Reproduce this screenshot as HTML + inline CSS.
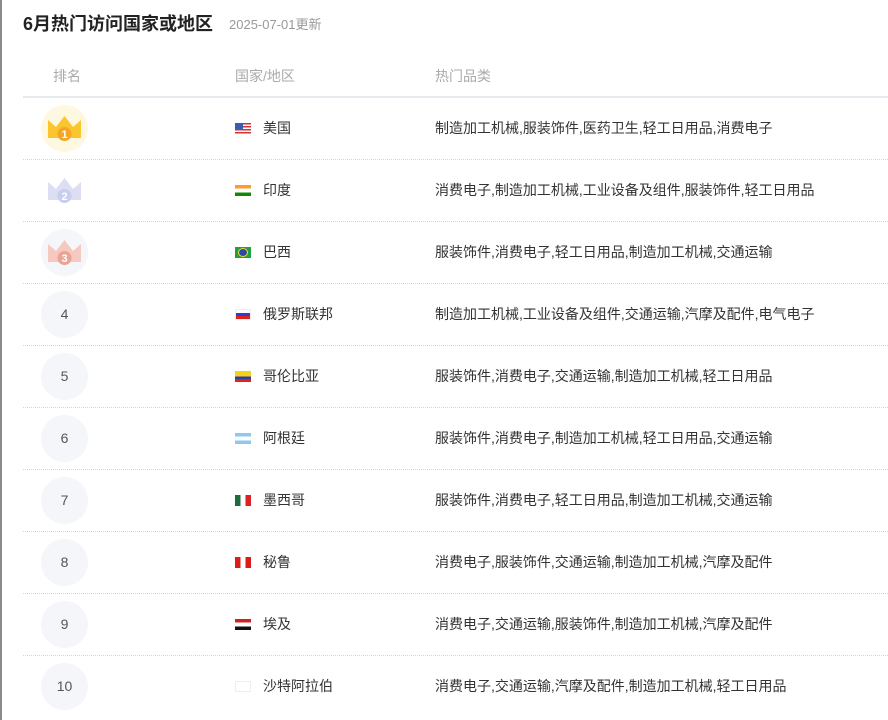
<!DOCTYPE html>
<html><head><meta charset="utf-8"><style>
*{margin:0;padding:0;box-sizing:border-box}
body{width:888px;height:720px;overflow:hidden;background:#fff;font-family:"Liberation Sans","Noto Sans CJK SC",sans-serif;position:relative;border-left:2px solid #8a8a8a}
.title{position:absolute;left:21px;top:10px;font-size:18px;font-weight:bold;color:#222}
.date{position:absolute;left:227px;top:14px;font-size:13px;color:#999}
.hd{position:absolute;top:66px;font-size:14px;color:#aaa}
.line{position:absolute;left:21px;right:0;top:96px;height:2px;background:#e8e9ee}
.row{position:absolute;left:21px;right:0;height:62px;border-bottom:1px dotted #d6d6d6}
.rk{position:absolute;left:18px;top:7px;width:47px;height:47px;border-radius:50%;background:#f5f6fa;text-align:center;line-height:47px;font-size:14px;color:#555}
.fl{position:absolute;left:212px;top:25px;width:16px;height:11px}
.nm{position:absolute;left:240px;top:20px;font-size:14px;color:#333}
.cat{position:absolute;left:412px;top:20px;font-size:14px;color:#333}
</style></head><body>
<div class="title">6月热门访问国家或地区</div>
<div class="date">2025-07-01更新</div>
<div class="hd" style="left:51px">排名</div>
<div class="hd" style="left:233px">国家/地区</div>
<div class="hd" style="left:433px">热门品类</div>
<div class="line"></div>

<div class="row" style="top:98px"><div class="rk" style="background:#fff8e0"><svg width="47" height="47" viewBox="0 0 47 47"><path d="M7 15l8 7 8.5-11 8.5 11 8-7v18H7z" fill="#fbc52f"/><circle cx="23.5" cy="29" r="7" fill="#f5a623"/><text x="23.5" y="33" font-size="11" fill="#fff" text-anchor="middle" font-weight="bold">1</text></svg></div><div class="fl" style="background:repeating-linear-gradient(#c33 0 1.5px,#fff 1.5px 3px)"><div style="width:8px;height:6px;background:#3b5bb5"></div></div><div class="nm">美国</div><div class="cat">制造加工机械,服装饰件,医药卫生,轻工日用品,消费电子</div></div>

<div class="row" style="top:160px"><div class="rk" style="background:#fff"><svg width="47" height="47" viewBox="0 0 47 47"><path d="M7 15l8 7 8.5-11 8.5 11 8-7v18H7z" fill="#dcdff3"/><circle cx="23.5" cy="29" r="7" fill="#c9cdee"/><text x="23.5" y="33" font-size="11" fill="#fff" text-anchor="middle" font-weight="bold">2</text></svg></div><div class="fl" style="background:linear-gradient(#f93 0 33%,#fff 33% 66%,#138808 66%)"></div><div class="nm">印度</div><div class="cat">消费电子,制造加工机械,工业设备及组件,服装饰件,轻工日用品</div></div>

<div class="row" style="top:222px"><div class="rk"><svg width="47" height="47" viewBox="0 0 47 47"><path d="M7 15l8 7 8.5-11 8.5 11 8-7v18H7z" fill="#f5c9c0"/><circle cx="23.5" cy="29" r="7" fill="#eba394"/><text x="23.5" y="33" font-size="11" fill="#fff" text-anchor="middle" font-weight="bold">3</text></svg></div><div class="fl" style="background:#229e45"><div style="margin:2px 4px;width:8px;height:7px;border-radius:50%;background:#2b49a3;box-shadow:0 0 0 1px #f8d82a"></div></div><div class="nm">巴西</div><div class="cat">服装饰件,消费电子,轻工日用品,制造加工机械,交通运输</div></div>

<div class="row" style="top:284px"><div class="rk">4</div><div class="fl" style="background:linear-gradient(#fff 0 33%,#2a3fd0 33% 66%,#d22 66%);border:1px solid #eee"></div><div class="nm">俄罗斯联邦</div><div class="cat">制造加工机械,工业设备及组件,交通运输,汽摩及配件,电气电子</div></div>

<div class="row" style="top:346px"><div class="rk">5</div><div class="fl" style="background:linear-gradient(#f7d117 0 50%,#2a3fa0 50% 75%,#d22 75%)"></div><div class="nm">哥伦比亚</div><div class="cat">服装饰件,消费电子,交通运输,制造加工机械,轻工日用品</div></div>

<div class="row" style="top:408px"><div class="rk">6</div><div class="fl" style="background:linear-gradient(#8cc8ef 0 33%,#fff 33% 66%,#8cc8ef 66%)"></div><div class="nm">阿根廷</div><div class="cat">服装饰件,消费电子,制造加工机械,轻工日用品,交通运输</div></div>

<div class="row" style="top:470px"><div class="rk">7</div><div class="fl" style="background:linear-gradient(90deg,#1b6e3a 0 33%,#fff 33% 66%,#d22 66%)"></div><div class="nm">墨西哥</div><div class="cat">服装饰件,消费电子,轻工日用品,制造加工机械,交通运输</div></div>

<div class="row" style="top:532px"><div class="rk">8</div><div class="fl" style="background:linear-gradient(90deg,#d91e18 0 33%,#fff 33% 66%,#d91e18 66%)"></div><div class="nm">秘鲁</div><div class="cat">消费电子,服装饰件,交通运输,制造加工机械,汽摩及配件</div></div>

<div class="row" style="top:594px"><div class="rk">9</div><div class="fl" style="background:linear-gradient(#c22 0 33%,#fff 33% 66%,#111 66%)"></div><div class="nm">埃及</div><div class="cat">消费电子,交通运输,服装饰件,制造加工机械,汽摩及配件</div></div>

<div class="row" style="top:656px;border:none"><div class="rk">10</div><div class="fl" style="border:1px solid #eee"></div><div class="nm">沙特阿拉伯</div><div class="cat">消费电子,交通运输,汽摩及配件,制造加工机械,轻工日用品</div></div>
</body></html>
